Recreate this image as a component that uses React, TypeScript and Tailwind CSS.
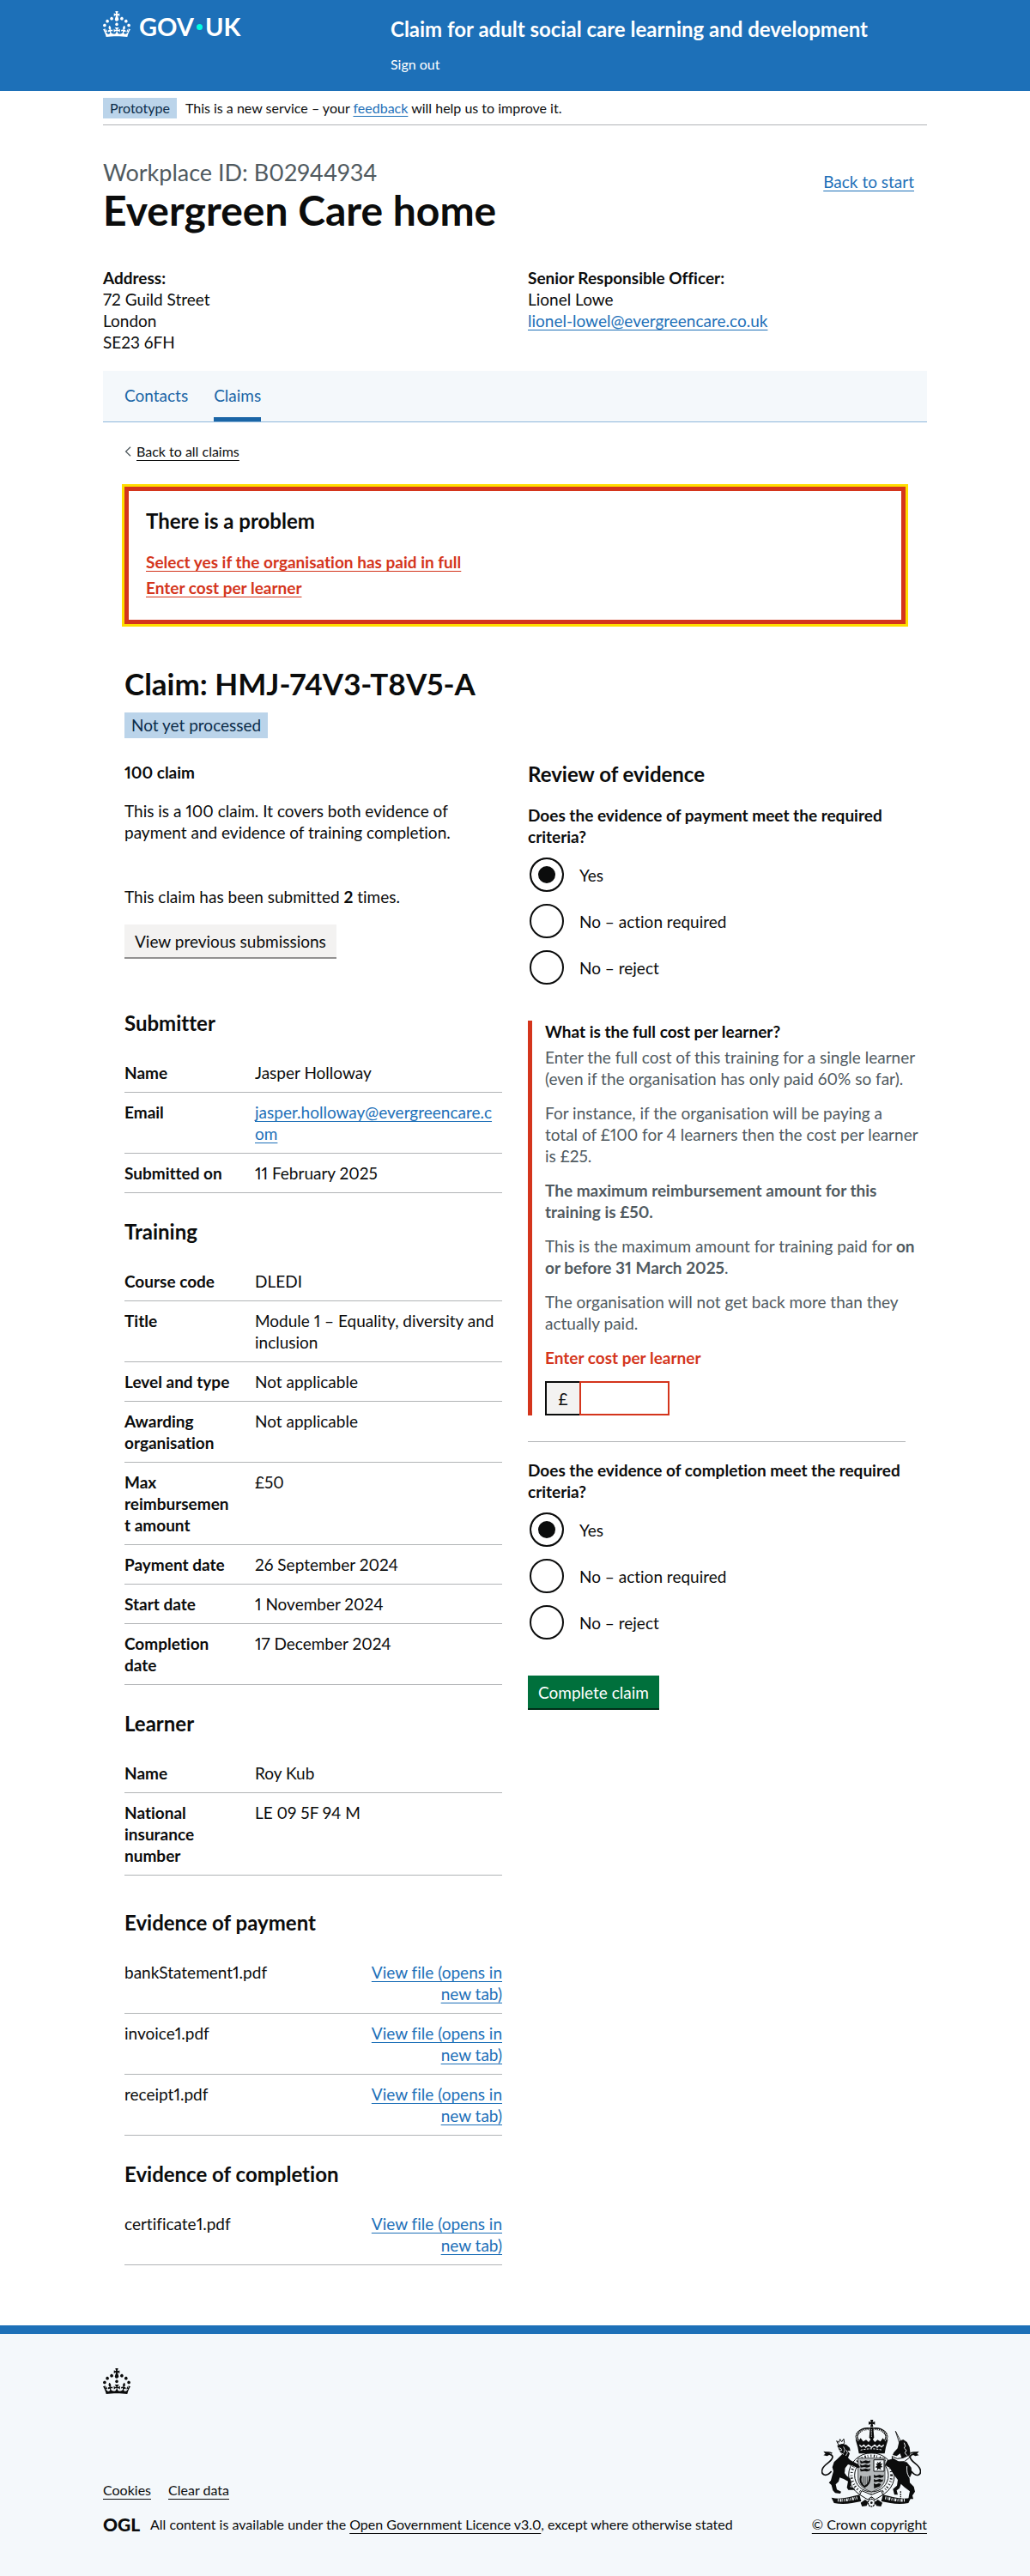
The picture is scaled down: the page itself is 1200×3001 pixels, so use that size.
import type { ReactNode } from "react";

const link = "text-[#1d70b8] underline decoration-1 underline-offset-3";
const darkLink = "underline decoration-1 underline-offset-4";
const container = "mx-auto max-w-[1020px] px-[30px]";

function Crown() {
  return (
    <svg viewBox="0 0 32 30" className="h-[30px] w-8 shrink-0" fill="currentColor" aria-hidden="true">
      <path
        fillRule="evenodd"
        clipRule="evenodd"
        d="M22.6 10.4c-1 .4-2-.1-2.4-1-.4-.9.1-2 1-2.4.9-.4 2 .1 2.4 1s-.1 2-1 2.4m-5.9 6.7c-.9.4-2-.1-2.4-1-.4-.9.1-2 1-2.4.9-.4 2 .1 2.4 1s-.1 2-1 2.4m10.8-3.7c-1 .4-2-.1-2.4-1-.4-.9.1-2 1-2.4.9-.4 2 .1 2.4 1s0 2-1 2.4m3.3 4.8c-1 .4-2-.1-2.4-1-.4-.9.1-2 1-2.4.9-.4 2 .1 2.4 1s-.1 2-1 2.4M17 4.7l2.3 1.2V2.5l-2.3.7-.2-.2.9-3h-3.4l.9 3-.2.2c-.1.1-2.3-.7-2.3-.7v3.4L15 4.7c.1.1.1.2.2.2l-1.3 4c-.1.2-.1.4-.1.6 0 1.1.8 2 1.9 2.2h.7c1-.2 1.9-1.1 1.9-2.1 0-.2 0-.4-.1-.6l-1.3-4c-.1-.2 0-.2.1-.3m-7.6 5.7c.9.4 2-.1 2.4-1 .4-.9-.1-2-1-2.4-.9-.4-2 .1-2.4 1s0 2 1 2.4m-5 3c.9.4 2-.1 2.4-1 .4-.9-.1-2-1-2.4-.9-.4-2 .1-2.4 1s.1 2 1 2.4m-3.2 4.8c.9.4 2-.1 2.4-1 .4-.9-.1-2-1-2.4-.9-.4-2 .1-2.4 1s0 2 1 2.4m14.8 11c4.4 0 8.6.3 12.3.8 1.1-4.5 2.4-7 3.7-8.8l-2.5-.9c.2 1.3.3 1.9 0 2.7-.4-.4-.8-1.1-1.1-2.3l-1.2 4c.7-.5 1.3-.8 2-.9-1.1 2.5-2.6 3.1-3.5 3-1.1-.2-1.7-1.2-1.5-2.1.3-1.2 1.5-1.5 2.1-.1 1.1-2.3-.8-3-2-2.3 1.9-1.9 2.1-3.5.6-5.6-2.1 1.6-2.1 3.2-1.2 5.5-1.2-1.4-3.2-.6-2.5 1.6.9-1.4 2.1-.5 1.9.8-.2 1.1-1.7 2.1-3.5 1.9-2.7-.2-2.9-2.1-2.9-3.6.7-.1 1.9.5 2.9 1.9l.4-4.3c-1.1 1.1-2.1 1.4-3.2 1.4.4-1.2 2.1-3 2.1-3h-5.4s1.7 1.9 2.1 3c-1.1 0-2.1-.2-3.2-1.4l.4 4.3c1-1.4 2.2-2 2.9-1.9-.1 1.5-.2 3.4-2.9 3.6-1.9.2-3.4-.8-3.5-1.9-.2-1.3 1-2.2 1.9-.8.7-2.3-1.2-3-2.5-1.6.9-2.2.9-3.9-1.2-5.5-1.5 2-1.3 3.7.6 5.6-1.2-.7-3.1 0-2 2.3.6-1.4 1.8-1.1 2.1.1.2.9-.3 1.9-1.5 2.1-.9.2-2.4-.5-3.5-3 .6 0 1.2.3 2 .9l-1.2-4c-.3 1.1-.7 1.9-1.1 2.3-.3-.8-.2-1.4 0-2.7l-2.9.9C1.3 23 2.6 25.5 3.7 30c3.7-.5 7.9-.8 12.3-.8"
      />
    </svg>
  );
}

function RoyalArms() {
  const ink = "#0b0c0c";
  const paper = "#f4f8fb";
  return (
    <svg viewBox="51 56 348 306" className="h-[102px] w-[116px]" fill={ink} stroke="none" aria-hidden="true">
      {/* Garter and shield */}
      <ellipse cx="226" cy="250" rx="80" ry="78" fill={paper} stroke={ink} strokeWidth="3" />
      <ellipse cx="226" cy="250" rx="70" ry="68" fill="none" stroke={ink} strokeWidth="9" strokeDasharray="3 8 4 6 2 9" />
      <ellipse cx="226" cy="250" rx="59" ry="58" fill={paper} stroke={ink} strokeWidth="3" />
      <path d="M179 190h94v72c0 24-24 38-47 46-23-8-47-22-47-46z" fill="#b4b8ba" stroke={ink} strokeWidth="2" />
      <path d="M234 196h36v40h-36z" fill={paper} stroke={ink} strokeWidth="3" />
      <path d="M245 202l6 5 8-6-2 9 8-2-6 8 6 5-8 2 3 8-9-4-6 6 1-9-7-2 7-6-5-7 7 1z" />
      <path d="M186 198l8 4 12-4 10 3 6-3-2 8-10 3-9-2-13 2zM186 212l8 4 12-4 10 3 6-3-2 8-10 3-9-2-13 2zM186 226l8 4 12-4 10 3 6-3-2 8-10 3-9-2-13 2z" />
      <path d="M234 248l8 4 12-4 10 3 5-3-2 8-10 3-9-2-13 2zM234 263l8 4 12-4 10 3 3-3-2 8-8 3-9-2-13 2zM234 278l8 4 10-4 8 3-6 8-9 3-10 4z" />
      <path d="M190 252c-6 16 0 30 12 38 12-6 20-18 18-38" fill="none" stroke={ink} strokeWidth="6" />
      <path d="M197 254v26M204 254v30M211 254v26" stroke={ink} strokeWidth="2" />
      {/* Crown */}
      <path d="M222 56h10l-2 8 8-2v11l-8-3 2 11h-10l2-11-8 3V62l8 2z" />
      <path d="M221 82h11l3 36-8 12-9-12z" />
      <path d="M226 90v26" stroke={paper} strokeWidth="3" strokeDasharray="3 3" />
      <path d="M183 134c-26-28 10-50 38-46M270 134c26-28-10-50-38-46" fill="none" stroke={ink} strokeWidth="9" />
      <path d="M181 130c-22-24 10-42 38-40M272 130c22-24-10-42-38-40" fill="none" stroke={paper} strokeWidth="4" strokeDasharray="4 3" />
      <path d="M170 124l10 8 8-12 9 12 10-6 9 8 11-14 11 14 9-8 10 6 9-12 8 12 10-8-8 28-4 22H182l-4-22z" />
      <path d="M184 144l7 7 8-7 7 8 9-8 11 9 11-9 9 8 7-8 8 7 8-7" fill="none" stroke={paper} strokeWidth="4" />
      <path d="M188 162c24-6 52-6 76 0" fill="none" stroke={paper} strokeWidth="3" strokeDasharray="7 4" />
      {/* Lion supporter */}
      <path d="M104 130l8 5 4-11 6 9 7-10 2 13-4 8h-16z" fill={paper} stroke={ink} strokeWidth="3" />
      <path d="M106 146l17-6 15 3 12 11 2 11-10-1 8 10-6 15 8 8 11 6 16 8 7 11-8 3-16-8-18-5-10 13-2 17 7 10 13 10 4 13-4 16 15 5v5h-22l-5-8 4-22-15-8-14-5-4 14-10 10 4 18 15 7-3 7-18-2-8-9-5-19-9-8 7-8 4-15 5-17-4-14 6-18 16-15 12-12-8-11z" />
      <path d="M112 154l8 3 2 6-9 1M128 150l5 11-4 10M138 162l4 10-6 10M119 172l10 5" fill="none" stroke={paper} strokeWidth="2.5" />
      <path d="M86 236c-20 24-38 10-32-7 6-19 34-25 36-43 0-12-16-7-22-15 9-2 15-3 20 3" fill="none" stroke={ink} strokeWidth="5" />
      <path d="M58 166l17 3 7 8-11 6-13-3 7-5z" />
      {/* Unicorn supporter */}
      <path d="M310 96l20 38-7 2z" fill="none" stroke={ink} strokeWidth="2.5" />
      <path d="M323 130l14-5 13 9 9 18 3 23-9 15-14 3-8-5-5-14-12 9-14-4 4-9 13-14z" />
      <path d="M340 136l4 12-4 7 8 8-5 9 7 9" fill="none" stroke={paper} strokeWidth="3" />
      <path d="M298 184l18 8 21-3 19-9 3 8-18 14-23 1-19-8z" fill={paper} stroke={ink} strokeWidth="3" />
      <path d="M281 198l22-7 19 11 27 2 16 19 2 20-8 17 1 16 14 14 4 17-9 14 3 12h-17l2-13 3-14-20-15-11-11-5 15-10 8 4 15h-12l-5-20 14-12 3-20-16-21-12-21-17-10z" />
      <path d="M350 218c-2 28 5 34 13 46M331 308c-8 7 4 14-4 23" fill="none" stroke={paper} strokeWidth="3" />
      <path d="M328 306v26" stroke={ink} strokeWidth="4" strokeDasharray="5 3" />
      <path d="M365 236c20 24 37 12 31-7-6-19-33-25-35-43 0-12 15-7 21-15-9-2-15-3-20 3" fill="none" stroke={ink} strokeWidth="5" />
      <path d="M392 166l-17 3-7 8 11 6 13-3-7-5z" />
      {/* Motto ribbon and compartment */}
      <path d="M86 328c32 8 62-2 98-10l6 23c-30 6-60 14-95 6z" />
      <path d="M364 328c-32 8-62-2-98-10l-6 23c30 6 60 14 95 6z" />
      <path d="M108 337c24 2 45-3 70-9M342 337c-24 2-45-3-70-9" fill="none" stroke={paper} strokeWidth="10" strokeDasharray="3 4 6 3 2 4" />
      <path d="M192 304l34 14 34-14 6 14-27 17-13-10-13 10-28-17z" fill={paper} stroke={ink} strokeWidth="3" />
      <path d="M188 346l16-11 10 8-5 14-16 2zM264 346l-16-11-10 8 5 14 16 2z" />
      <ellipse cx="226" cy="346" rx="12" ry="13" fill={paper} stroke={ink} strokeWidth="4" strokeDasharray="6 2" />
      <circle cx="226" cy="346" r="4" />
    </svg>
  );
}

function SectionHeading({ children }: { children: ReactNode }) {
  return <h3 className="text-2xl/[30px] font-bold">{children}</h3>;
}

function SummaryList({ rows }: { rows: [string, ReactNode][] }) {
  return (
    <dl className="mt-5">
      {rows.map(([key, value]) => (
        <div key={key} className="grid grid-cols-[125px_1fr] gap-x-[27px] border-b border-[#b1b4b6] py-2.5">
          <dt className="min-w-0 font-bold wrap-break-word">{key}</dt>
          <dd className="min-w-0 pr-1 wrap-break-word">{value}</dd>
        </div>
      ))}
    </dl>
  );
}

function FileList({ files }: { files: string[] }) {
  return (
    <ul className="mt-5">
      {files.map((file) => (
        <li key={file} className="flex justify-between border-b border-[#b1b4b6] py-2.5">
          <span>{file}</span>
          <a href="#" className={`${link} w-[155px] text-right`}>
            View file (opens in new tab)
          </a>
        </li>
      ))}
    </ul>
  );
}

function Radios({ name, legend }: { name: string; legend: string }) {
  return (
    <fieldset>
      <legend className="mb-2.5 font-bold">{legend}</legend>
      <div className="flex flex-col gap-2.5">
        {["Yes", "No – action required", "No – reject"].map((option, i) => (
          <label key={option} className="flex h-11 items-center gap-[18px] pl-0.5">
            <input
              type="radio"
              name={name}
              defaultChecked={i === 0}
              className="size-10 shrink-0 appearance-none rounded-full border-2 border-[#0b0c0c] bg-white checked:bg-[#0b0c0c] checked:shadow-[inset_0_0_0_8px_white]"
            />
            {option}
          </label>
        ))}
      </div>
    </fieldset>
  );
}

export default function App() {
  return (
    <div className="bg-white font-['Lato',sans-serif] text-[19px]/[25px] text-[#0b0c0c] [font-feature-settings:'pnum'] [font-variant-ligatures:none]">
      <header className="bg-[#1d70b8] text-white">
        <div className={`${container} flex pt-[13px] pb-[21px]`}>
          <div className="w-[335px] shrink-0">
            <a href="#" aria-label="GOV.UK" className="inline-flex items-start gap-2.5">
              <Crown />
              <span className="flex items-center pt-[3px] text-[29px]/[30px] font-bold">
                GOV
                <span className="mx-[3px] size-[7px] rounded-full bg-[#00ffe0]" />
                UK
              </span>
            </a>
          </div>
          <div className="pt-1.5">
            <a href="#" className="block text-2xl/[30px] font-bold">
              Claim for adult social care learning and development
            </a>
            <nav className="mt-4 text-base/5">
              <a href="#">Sign out</a>
            </nav>
          </div>
        </div>
      </header>

      <div className={container}>
        <div className="flex items-center gap-2.5 border-b border-[#b1b4b6] pt-2 pb-[7px] text-base/6">
          <strong className="bg-[#bbd4ea] px-2 font-normal text-[#0c2d4a]">Prototype</strong>
          <span>
            This is a new service – your{" "}
            <a href="#" className={link}>
              feedback
            </a>{" "}
            will help us to improve it.
          </span>
        </div>

        <div className="flex items-start justify-between pt-10 pr-[15px]">
          <div>
            <span className="block text-[27px]/[30px] text-[#505a5f]">Workplace ID: B02944934</span>
            <h1 className="mt-1 text-5xl/[50px] font-bold">Evergreen Care home</h1>
          </div>
          <a href="#" className={`${link} mt-[13px]`}>
            Back to start
          </a>
        </div>

        <div className="mt-[41px] grid grid-cols-2 gap-[30px]">
          <address className="not-italic">
            <strong>Address:</strong>
            <br />
            72 Guild Street
            <br />
            London
            <br />
            SE23 6FH
          </address>
          <div>
            <strong>Senior Responsible Officer:</strong>
            <br />
            Lionel Lowe
            <br />
            <a href="#" className={link}>
              lionel-lowel@evergreencare.co.uk
            </a>
          </div>
        </div>

        <nav className="mt-[21px] flex gap-[30px] border-b border-[#8eb8dc] bg-[#f4f8fb] px-[25px] text-[#1a65a6]">
          <a href="#" className="pt-4 pb-[18px]">
            Contacts
          </a>
          <a href="#" aria-current="page" className="border-b-5 border-[#1a65a6] pt-4 pb-[13px]">
            Claims
          </a>
        </nav>

        <main className="px-[25px] pt-6 pb-[70px]">
          <a href="#" className="flex w-fit items-center gap-1.5 text-base/5">
            <svg viewBox="0 0 8 12" className="h-3 w-2" fill="none" stroke="#505a5f" strokeWidth="1.3" aria-hidden="true">
              <path d="M7 .7 1.6 6 7 11.3" />
            </svg>
            <span className={darkLink}>Back to all claims</span>
          </a>

          <div
            role="alert"
            className="mt-[31px] border-5 border-[#d4351c] p-5 outline-3 outline-[#ffdd00]"
          >
            <h2 className="text-2xl/[30px] font-bold">There is a problem</h2>
            <ul className="mt-5 mb-[5px] flex flex-col gap-[5px] font-bold text-[#d4351c] underline decoration-1 underline-offset-3">
              <li>
                <a href="#payment">Select yes if the organisation has paid in full</a>
              </li>
              <li>
                <a href="#cost">Enter cost per learner</a>
              </li>
            </ul>
          </div>

          <h2 className="mt-[49px] text-[35px]/[40px] font-bold">Claim: HMJ-74V3-T8V5-A</h2>
          <strong className="mt-3.5 block w-fit bg-[#bbd4ea] px-2 py-[3px] leading-6 font-normal text-[#0c2d4a]">
            Not yet processed
          </strong>

          <div className="mt-[27px] grid grid-cols-2 items-start gap-[30px]">
            <div className="min-w-0">
              <h3 className="font-bold">100 claim</h3>
              <p className="mt-5">This is a 100 claim. It covers both evidence of payment and evidence of training completion.</p>
              <p className="mt-[50px]">
                This claim has been submitted <strong>2</strong> times.
              </p>
              <button type="button" className="mt-5 mb-[60px] block h-10 border-b-2 border-[#929191] bg-[#f3f2f1] px-3">
                View previous submissions
              </button>

              <SectionHeading>Submitter</SectionHeading>
              <SummaryList
                rows={[
                  ["Name", "Jasper Holloway"],
                  [
                    "Email",
                    <a href="#" className={link}>
                      jasper.holloway@evergreencare.com
                    </a>,
                  ],
                  ["Submitted on", "11 February 2025"],
                ]}
              />

              <div className="mt-[30px]">
                <SectionHeading>Training</SectionHeading>
                <SummaryList
                  rows={[
                    ["Course code", "DLEDI"],
                    ["Title", "Module 1 – Equality, diversity and inclusion"],
                    ["Level and type", "Not applicable"],
                    ["Awarding organisation", "Not applicable"],
                    ["Max reimbursement amount", "£50"],
                    ["Payment date", "26 September 2024"],
                    ["Start date", "1 November 2024"],
                    ["Completion date", "17 December 2024"],
                  ]}
                />
              </div>

              <div className="mt-[30px]">
                <SectionHeading>Learner</SectionHeading>
                <SummaryList
                  rows={[
                    ["Name", "Roy Kub"],
                    ["National insurance number", "LE 09 5F 94 M"],
                  ]}
                />
              </div>

              <div className="mt-10">
                <SectionHeading>Evidence of payment</SectionHeading>
                <FileList files={["bankStatement1.pdf", "invoice1.pdf", "receipt1.pdf"]} />
              </div>

              <div className="mt-[30px]">
                <SectionHeading>Evidence of completion</SectionHeading>
                <FileList files={["certificate1.pdf"]} />
              </div>
            </div>

            <form className="min-w-0">
              <h3 className="mb-5 text-2xl/[30px] font-bold">Review of evidence</h3>
              <Radios name="payment" legend="Does the evidence of payment meet the required criteria?" />

              <div className="mt-10 border-l-5 border-[#d4351c] pl-[15px]">
                <label htmlFor="cost" className="block font-bold">
                  What is the full cost per learner?
                </label>
                <div id="cost-hint" className="mt-[5px] -mr-5 flex flex-col gap-[15px] text-[#505a5f]">
                  <p>Enter the full cost of this training for a single learner (even if the organisation has only paid 60% so far).</p>
                  <p>
                    For instance, if the organisation will be paying a total&nbsp;of £100 for 4 learners then the cost per learner
                    is&nbsp;£25.
                  </p>
                  <p className="font-bold">The maximum reimbursement amount for this training is £50.</p>
                  <p>
                    This is the maximum amount for training paid for <strong>on or before 31 March 2025</strong>.
                  </p>
                  <p>The organisation will not get back more than they actually paid.</p>
                </div>
                <p id="cost-error" className="my-[15px] font-bold text-[#d4351c]">
                  Enter cost per learner
                </p>
                <div className="flex h-10">
                  <span className="flex w-10 items-center justify-center border-2 border-r-0 border-[#0b0c0c] bg-[#f3f2f1]">£</span>
                  <input
                    id="cost"
                    type="text"
                    inputMode="decimal"
                    aria-describedby="cost-hint cost-error"
                    className="w-[105px] border-2 border-[#d4351c] px-1"
                  />
                </div>
              </div>

              <hr className="mt-[30px] mb-5 border-[#b1b4b6]" />

              <Radios name="completion" legend="Does the evidence of completion meet the required criteria?" />

              <button type="button" className="mt-10 block h-10 border-b-2 border-[#002d18] bg-[#00703c] px-3 text-white">
                Complete claim
              </button>
            </form>
          </div>
        </main>
      </div>

      <footer className="border-t-10 border-[#1d70b8] bg-[#f4f8fb] text-base/5">
        <div className={`${container} pt-10 pb-[50px]`}>
          <Crown />
          <div className="mt-[30px] flex items-end justify-between">
            <div>
              <ul className="mb-5 flex gap-5">
                <li>
                  <a href="#" className={darkLink}>
                    Cookies
                  </a>
                </li>
                <li>
                  <a href="#" className={darkLink}>
                    Clear data
                  </a>
                </li>
              </ul>
              <div className="flex items-center gap-3.5">
                <span className="w-[41px] text-[21px]/5 font-black">OGL</span>
                <span>
                  All content is available under the{" "}
                  <a href="#" className={darkLink}>
                    Open Government Licence v3.0
                  </a>
                  , except where otherwise stated
                </span>
              </div>
            </div>
            <a href="#" className={`${darkLink} flex flex-col items-end gap-2.5`}>
              <span className="pr-[7px]">
                <RoyalArms />
              </span>
              © Crown copyright
            </a>
          </div>
        </div>
      </footer>
    </div>
  );
}
